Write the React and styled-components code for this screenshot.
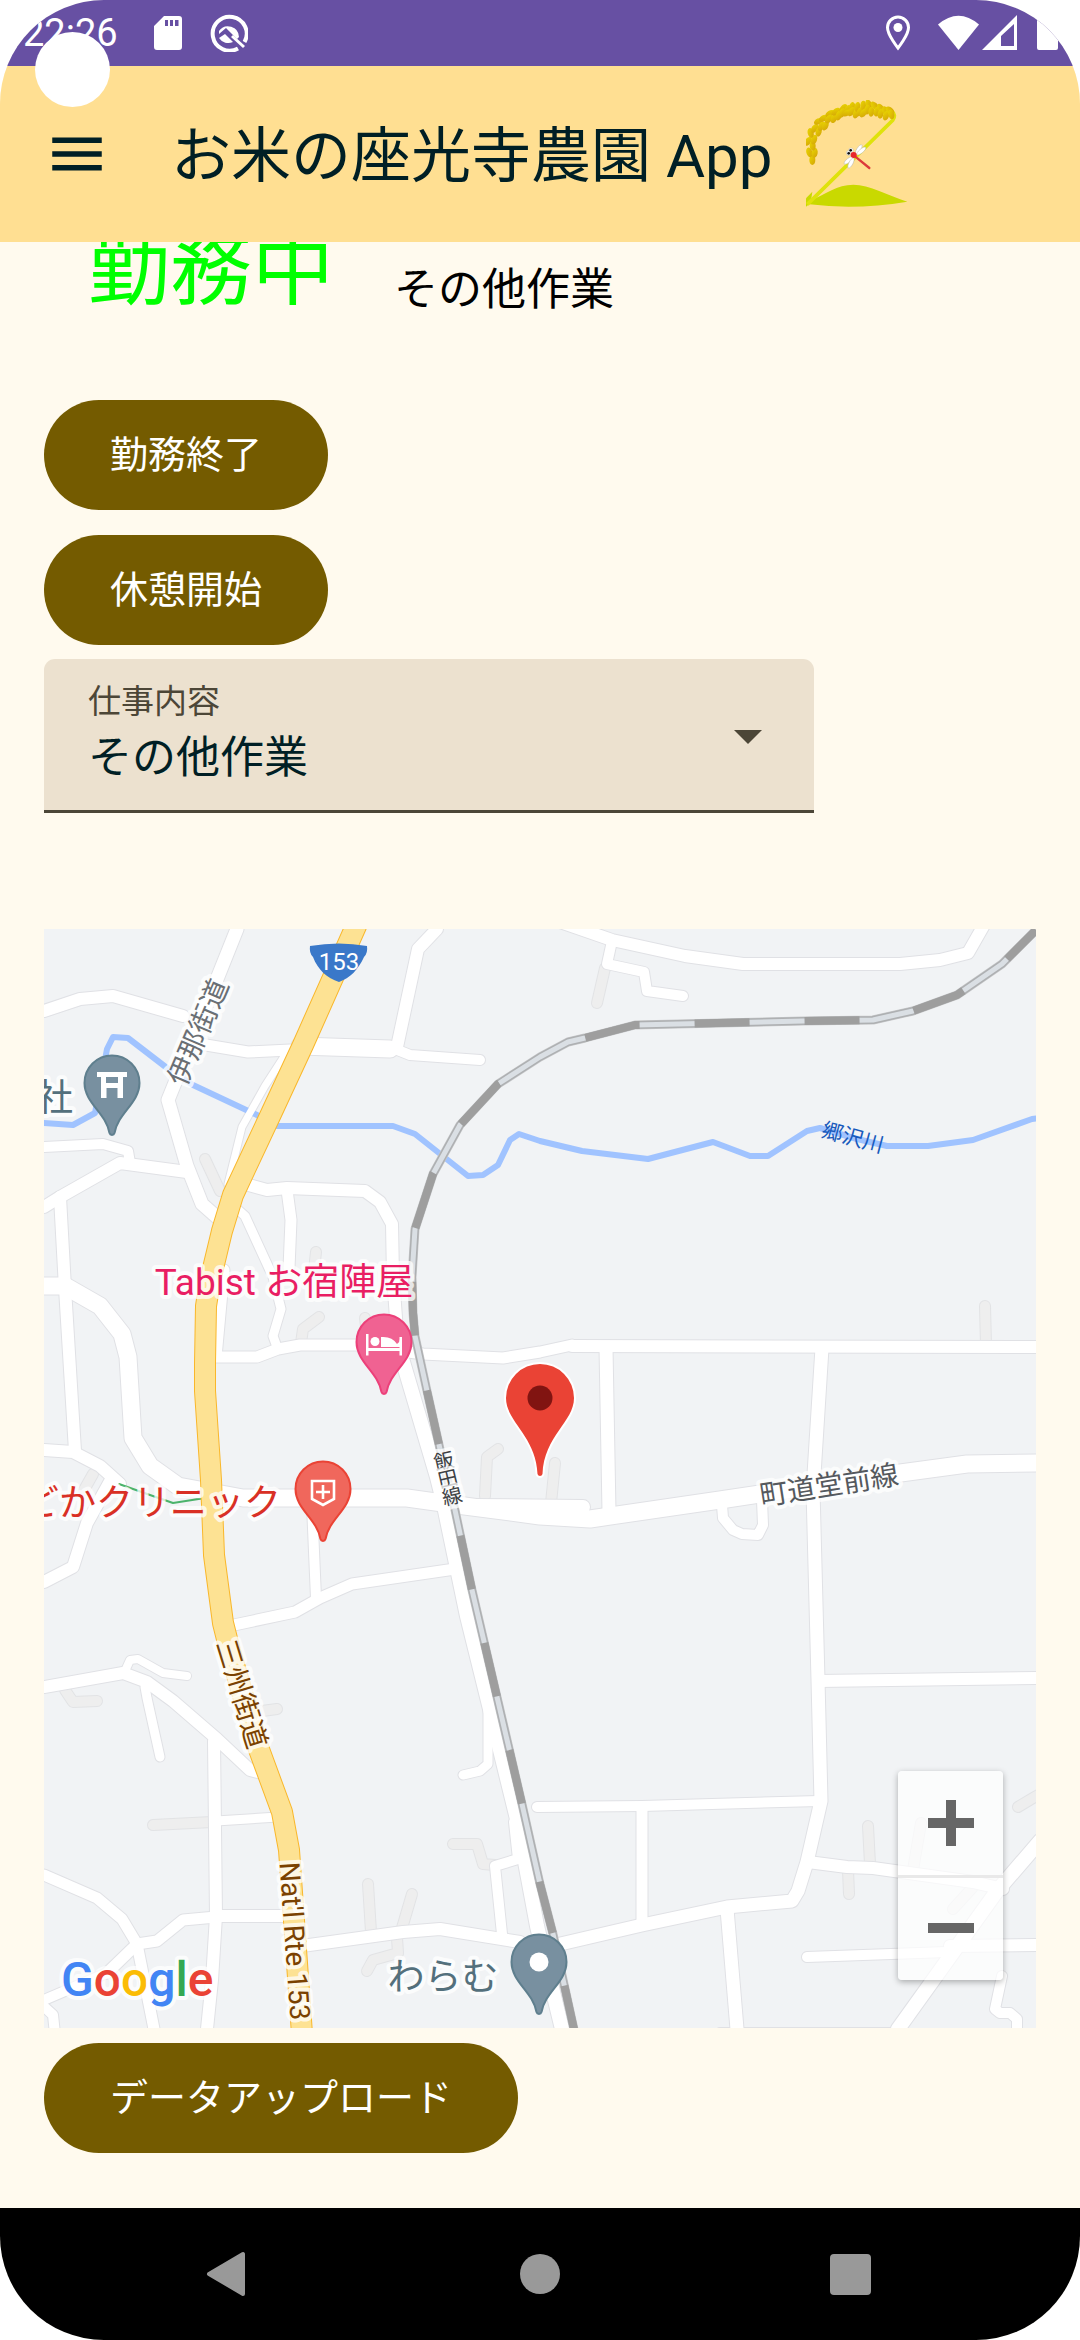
import React, { useState } from "react";
import styled, { createGlobalStyle } from "styled-components";

const GlobalStyle = createGlobalStyle`
  html, body { margin: 0; background: #ffffff; }
  *, *::before, *::after { box-sizing: border-box; }
  body, button, select { font-family: Roboto, "Noto Sans CJK JP", sans-serif; }
`;

const Screen = styled.div`
  position: relative;
  display: flex;
  flex-direction: column;
  min-height: 100vh;
  overflow: hidden;
  border-radius: 104px;
  background: #fffaee;
`;

const CameraHole = styled.div`
  position: absolute;
  top: 32px;
  left: 35px;
  z-index: 2;
  width: 75px;
  height: 75px;
  border-radius: 50%;
  background: #ffffff;
`;

const StatusBar = styled.header`
  display: flex;
  align-items: center;
  justify-content: space-between;
  height: 66px;
  padding: 0 22px 0 23px;
  background: #6750a3;
  color: #ffffff;
  font-size: 38px;
  line-height: 66px;
`;

const StatusGroup = styled.div`
  display: flex;
  align-items: center;
  gap: ${(p) => p.$gap}px;
`;

const Clock = styled.time`
  margin-right: 8px;
`;

const AppBar = styled.nav`
  position: relative;
  z-index: 1;
  display: flex;
  align-items: center;
  height: 176px;
  padding: 0 44px;
  background: #ffdf92;
`;

const IconButton = styled.button`
  display: grid;
  place-items: center;
  width: 66px;
  height: 66px;
  padding: 0;
  border: 0;
  background: transparent;
  color: #001f25;
`;

const Title = styled.h1`
  margin: 0 34px 0 61px;
  padding-top: 6px;
  color: #001f25;
  font-size: 60px;
  font-weight: 400;
  line-height: 88px;
  white-space: nowrap;
`;

const Main = styled.main`
  display: flex;
  flex: 1;
  flex-direction: column;
  align-items: flex-start;
  padding: 0 44px 55px;
`;

const WorkState = styled.div`
  display: flex;
  align-items: flex-end;
  gap: 60px;
  margin-top: -32px;
  margin-bottom: 70px;
  padding-left: 44px;
`;

const StateText = styled.strong`
  color: #00ff00;
  font-size: 82px;
  font-weight: 400;
  line-height: 120px;
`;

const TaskText = styled.span`
  color: #000000;
  font-size: 44px;
  line-height: 80px;
`;

const ButtonStack = styled.div`
  display: flex;
  flex-direction: column;
  align-items: flex-start;
  gap: 25px;
`;

const PillButton = styled.button`
  height: 110px;
  padding: 0 66px;
  border: 0;
  border-radius: 55px;
  background: #745b00;
  color: #ffffff;
  font-size: 38px;
  line-height: 56px;
`;

const Field = styled.div`
  position: relative;
  display: flex;
  flex-direction: column;
  width: 770px;
  max-width: 100%;
  height: 154px;
  margin: 14px 0 116px;
  padding-top: 19px;
  border-bottom: 3px solid #4c4637;
  border-radius: 11px 11px 0 0;
  background: #ece1cf;
`;

const FieldLabel = styled.label`
  padding-left: 44px;
  color: #4c4637;
  font-size: 33px;
  line-height: 48px;
`;

const FieldSelect = styled.select`
  height: 64px;
  padding: 0 110px 0 44px;
  border: 0;
  appearance: none;
  background: transparent;
  color: #001f25;
  font-size: 44px;
  line-height: 64px;
`;

const FieldArrow = styled.svg`
  position: absolute;
  top: 71px;
  right: 52px;
  pointer-events: none;
`;

const MapPanel = styled.section`
  position: relative;
  flex: 1;
  width: 100%;
  min-height: 600px;
  margin-bottom: 15px;
  overflow: hidden;
  background: #f1f3f5;
`;

const MapCanvas = styled.svg`
  position: absolute;
  inset: 0;
  width: 100%;
  height: 100%;
  font-family: Roboto, "Noto Sans CJK JP", sans-serif;
`;

const MapLabel = styled.text`
  fill: ${(p) => p.$color};
  font-size: ${(p) => p.$size}px;
  font-weight: ${(p) => p.$weight || 400};
  text-anchor: ${(p) => p.$anchor || "middle"};
  paint-order: stroke;
  stroke: ${(p) => (p.$plain ? "none" : "rgba(255, 255, 255, 0.75)")};
  stroke-width: 8px;
  stroke-linejoin: round;
`;

const ZoomControls = styled.div`
  position: absolute;
  right: 33px;
  bottom: 48px;
  display: flex;
  flex-direction: column;
  width: 105px;
  border-radius: 4px;
  background: rgba(255, 255, 255, 0.72);
  box-shadow: 0 2px 6px rgba(0, 0, 0, 0.3);
`;

const ZoomButton = styled.button`
  display: grid;
  place-items: center;
  height: 104px;
  padding: 0;
  border: 0;
  background: transparent;
  & + & {
    height: 105px;
    padding-bottom: 3px;
    border-top: 3px solid #e9e9e9;
  }
`;

const SystemNav = styled.footer`
  display: grid;
  grid-template-columns: repeat(3, 1fr);
  align-items: center;
  justify-items: center;
  height: 132px;
  padding: 0 73px;
  background: #000000;
`;

/* Road centre lines: [width, points] */
const ROADS = [
  [13, "237,929 217,979 168,1100 187,1166 202,1204 219,1219"],
  [12, "44,1011 80,999 113,996 183,1016"],
  [11, "200,1044 248,1052 290,1050"],
  [17, "300,1046 390,1049"],
  [10, "390,1047 410,1055 480,1060"],
  [12, "437,929 418,949 397,1047"],
  [7, "287,1052 265,1086 242,1127 228,1184"],
  [10, "44,1147 103,1144 128,1151 130,1163"],
  [12, "44,1207 60,1197 120,1163 187,1172"],
  [12, "60,1197 65,1288 75,1451"],
  [17, "44,1286 65,1286 100,1306 122,1334 128,1357 133,1438 150,1466 178,1486 243,1498 407,1498 457,1505 540,1516 590,1519 720,1500 893,1474 967,1464 1036,1463"],
  [12, "44,1450 73,1452 100,1466 120,1484"],
  [12, "112,1478 87,1523 73,1567 44,1582"],
  [12, "245,1184 267,1190 287,1188 365,1191 380,1202 392,1224 393,1277 398,1345"],
  [14, "398,1345 437,1477 443,1501 467,1616 490,1709 517,1819 537,1926 562,2029"],
  [9, "236,1208 245,1216 273,1277 281,1309 273,1336 277,1347"],
  [11, "287,1190 291,1220 289,1268"],
  [11, "224,1270 216,1357 257,1357 278,1349 300,1345 357,1345 423,1354 503,1358 540,1352 572,1345"],
  [12, "572,1346 1036,1347"],
  [13, "606,1348 609,1512"],
  [13, "822,1348 813,1490 818,1680 821,1801 807,1862 798,1891 792,1901 727,1907 642,1925 556,1945"],
  [12, "818,1681 1036,1678"],
  [10, "537,1807 642,1806 819,1801"],
  [11, "642,1807 642,1925"],
  [13, "727,1909 737,2029"],
  [6, "720,2031 900,2031"],
  [12, "808,1862 847,1867 873,1868 973,1882 1003,1889"],
  [14, "1040,1841 997,1891 898,2029"],
  [10, "807,1957 947,1952"],
  [12, "950,1946 1036,1945"],
  [10, "1002,1976 995,2009 1000,2013 1010,2013 1017,2019 1017,2034"],
  [12, "560,922 612,940 685,956 743,964 900,964 940,960 968,953 984,925"],
  [10, "612,941 607,964 644,972 647,991 683,996"],
  [10, "722,1505 723,1518 733,1530 742,1534 758,1535 763,1525 762,1500"],
  [14, "470,1506 583,1507"],
  [12, "44,1687 123,1673 147,1682 173,1701 217,1739 250,1770 262,1773"],
  [11, "234,1625 295,1612 320,1598 352,1584 455,1569"],
  [10, "312,1505 316,1598"],
  [8, "125,1671 130,1660 138,1659 163,1673 187,1676"],
  [9, "145,1687 147,1698 160,1757"],
  [12, "214,1741 216,1916 212,1980 207,2029"],
  [9, "216,1821 278,1817"],
  [12, "216,1916 290,1916"],
  [11, "44,1875 97,1898 122,1919 137,1944 155,2034"],
  [11, "216,1917 183,1920 157,1941 137,1944 107,1973"],
  [10, "107,1973 44,2000"],
  [10, "40,2003 53,2015 55,2034"],
  [12, "302,1946 403,1932 440,1929 520,1942"],
  [10, "502,1934 495,1866 518,1859 514,1822"],
  [9, "488,1709 488,1764 480,1771 463,1775"],
];

const FOOTPATHS = [
  "605,968 597,1003", "368,1884 371,1932", "412,1894 402,1928",
  "397,1938 398,1953 373,1960 367,1971", "453,1844 477,1844 483,1864 495,1865",
  "97,1701 73,1702 65,1690", "262,1711 277,1709", "205,1159 220,1191",
  "316,1252 314,1270", "319,1317 303,1329 301,1343", "365,1318 367,1335",
  "498,1449 487,1457 485,1496", "555,1463 551,1503", "985,1306 986,1345",
  "868,1826 870,1864", "848,1870 849,1894", "921,1823 913,1870",
  "973,1887 953,1909", "1040,1794 1033,1798 1018,1807", "153,1825 212,1822", "93,1474 84,1490",
];

const HIGHWAY =
  "356,926 303,1045 270,1116 233,1195 222,1231 210,1281 206,1306 205,1363 205,1391 211,1480 213,1530 214,1555 223,1623 230,1651 257,1744 282,1812 289,1850 302,2034";
const RIVER =
  "44,1123 73,1125 95,1113 107,1049 113,1037 128,1038 167,1068 193,1085 257,1115 273,1126 393,1126 415,1134 468,1176 483,1175 498,1165 510,1140 519,1134 540,1141 582,1151 648,1159 713,1142 750,1156 768,1156 807,1131 820,1128 857,1139 887,1146 928,1146 973,1140 1032,1119 1040,1118";
const RAILWAY =
  "1036,930 1007,959 1002,964 957,995 913,1011 873,1020 803,1021 635,1025 585,1038 568,1042 540,1057 498,1084 460,1125 433,1174 415,1229 412,1277 413,1313 415,1336 427,1391 440,1449 455,1510 472,1590 497,1697 522,1804 540,1884 553,1934 575,2034";
const RAIL_DASHES =
  "41 54 54 55 55 55 55 55 56 98 56 56 58 54 54 56 55 94 55 55 55 55 55 80 53 54 60 0";

const PIN_SHAPE =
  "M0-27.5A27.5 27.5 0 0 1 27.5 0C27.5 20 6 30 2.5 50A2.6 2.6 0 0 1-2.5 50C-6 30-27.5 20-27.5 0A27.5 27.5 0 0 1 0-27.5Z";

const GRAINS = [
  [97, 243, 0], [88, 220, -15], [104, 222, 10], [84, 187, 35], [98, 200, -5], [102, 182, 20],
  [92, 162, -15], [104, 148, 35], [116, 158, 15], [116, 127, 65], [130, 118, 60], [124, 142, 30],
  [136, 140, 25], [150, 104, 60], [146, 120, 35], [162, 118, 25], [168, 98, 50], [176, 110, 20],
  [190, 88, 40], [186, 102, 20], [202, 92, 30], [200, 102, 60], [216, 84, 15], [214, 98, 30],
  [228, 104, 20], [232, 84, 10], [240, 98, 30], [250, 80, 0], [250, 102, 35], [266, 76, -20],
  [262, 92, 10], [274, 98, 5], [284, 80, -45], [290, 98, 10], [302, 88, -30], [302, 104, 15],
  [316, 96, -20], [318, 110, 20], [330, 94, -50], [334, 106, -10],
];

function MapPin({ x, y, fill, edge, children }) {
  return (
    <g transform={`translate(${x} ${y})`}>
      <path d={PIN_SHAPE} fill={fill} stroke={edge} strokeWidth="2" />
      {children}
    </g>
  );
}

function FarmLogo() {
  return (
    <svg width="102" height="108" viewBox="78 63 306 324" role="img" aria-label="座光寺農園">
      <defs>
        <linearGradient id="grain" x1="0" y1="0" x2="1" y2="1">
          <stop offset="0" stopColor="#ead800" />
          <stop offset="1" stopColor="#d3a208" />
        </linearGradient>
      </defs>
      <path d="M88 366C140 345 170 317 220 317C268 317 325 350 382 368Q230 394 88 376Z" fill="#c9d900" />
      <path d="M78 358L97 338L92 372L78 383Z" fill="#c9d900" />
      <path d="M82 376L338 124Q350 108 335 97" fill="none" stroke="#dfe20c" strokeWidth="11" />
      {GRAINS.map(([x, y, a], i) => (
        <ellipse key={i} cx={x} cy={y} rx="9" ry="15" fill="url(#grain)" transform={`rotate(${a} ${x} ${y})`} />
      ))}
      <g fill="#fff" stroke="#b8b8b0" strokeWidth="1.5">
        <ellipse cx="236" cy="212" rx="17" ry="6" transform="rotate(-58 236 212)" />
        <ellipse cx="244" cy="216" rx="17" ry="6" transform="rotate(-40 244 216)" />
        <ellipse cx="206" cy="244" rx="17" ry="6" transform="rotate(-38 206 244)" />
        <ellipse cx="213" cy="252" rx="17" ry="6" transform="rotate(-62 213 252)" />
        <circle cx="206" cy="222" r="7" />
        <circle cx="213" cy="214" r="7" />
      </g>
      <path d="M226 233L268 267" stroke="#dc3a3a" strokeWidth="7" strokeLinecap="round" />
      <circle cx="221" cy="228" r="9" fill="#e8262e" />
      <circle cx="206" cy="223" r="4" fill="#111" />
      <circle cx="212" cy="214" r="4" fill="#111" />
    </svg>
  );
}

function AreaMap() {
  return (
    <MapCanvas viewBox="44 929 992 1099" preserveAspectRatio="xMidYMid slice" aria-hidden="true">
      <g fill="none" strokeLinecap="round" strokeLinejoin="round">
        {FOOTPATHS.map((p, i) => <polyline key={i} points={p} stroke="#e2e3e5" strokeWidth="12" />)}
        {FOOTPATHS.map((p, i) => <polyline key={i} points={p} stroke="#eeeeee" strokeWidth="10" />)}
        {ROADS.map(([w, p], i) => <polyline key={i} points={p} stroke="#e0e1e5" strokeWidth={w + 2} />)}
        <polyline points={RIVER} stroke="#a0c3ff" strokeWidth="6" />
        {ROADS.map(([w, p], i) => <polyline key={i} points={p} stroke="#ffffff" strokeWidth={w} />)}
        <polyline points="119,1484 150,1495 173,1503 205,1498" stroke="#4bb36b" strokeWidth="2" />
        <polyline points={HIGHWAY} stroke="#f9b72b" strokeWidth="22" />
        <polyline points={HIGHWAY} stroke="#fde293" strokeWidth="20" />
      </g>
      <g fill="none" strokeLinejoin="round">
        <polyline points={RAILWAY} stroke="#c9cacc" strokeWidth="9" />
        <polyline points={RAILWAY} stroke="#aeb0b2" strokeWidth="8" />
        <polyline points={RAILWAY} stroke="#dadfe4" strokeWidth="5" />
        <polyline points={RAILWAY} stroke="#9e9e9e" strokeWidth="8" strokeDasharray={RAIL_DASHES} />
      </g>

      <path d="M310 946Q339 941 367 946Q368 953 364 957C358 970 350 978 339 982C327 978 318 970 313 957Q309 953 310 946Z" fill="#3a78c9" />
      <MapLabel x="339" y="970" $size={24} $color="#ffffff" $plain>153</MapLabel>

      <MapLabel transform="translate(198 1032) rotate(-67)" y="10" $size={28} $color="#6a6f74">伊那街道</MapLabel>
      <MapLabel transform="translate(242 1694) rotate(73)" y="10" $size={28} $color="#7a4100">三州街道</MapLabel>
      <MapLabel transform="translate(295 1941) rotate(86)" y="10" $size={28} $color="#7a4100">Nat'l Rte 153</MapLabel>
      <MapLabel transform="translate(853 1137) rotate(15)" y="8" $size={21} $color="#185abc" $plain>郷沢川</MapLabel>
      <MapLabel transform="translate(829 1485) rotate(-9)" y="10" $size={28} $color="#55595e">町道堂前線</MapLabel>
      <MapLabel transform="translate(448 1479) rotate(-13)" $size={20} $color="#3c4043">
        <tspan x="0" y="-11">飯</tspan>
        <tspan x="0" y="7">田</tspan>
        <tspan x="0" y="25">線</tspan>
      </MapLabel>

      <MapLabel x="73" y="1111" $anchor="end" $size={37} $color="#54707c">社</MapLabel>
      <MapLabel x="284" y="1295" $size={37} $color="#e91e63">Tabist お宿陣屋</MapLabel>
      <MapLabel x="281" y="1516" $anchor="end" $size={37} $color="#d93025">どかクリニック</MapLabel>
      <MapLabel x="443" y="1990" $size={37} $color="#54707c">わらむ</MapLabel>

      <MapPin x={112} y={1083} fill="#7890a0" edge="#5f7f8e">
        <path d="M-15-11H15V-6H11V15H5.500V5H-5.500V15H-11V-6H-15ZM-6-6V0H6V-6Z" fill="#fff" fillRule="evenodd" />
      </MapPin>
      <MapPin x={384} y={1342} fill="#f06292" edge="#ec407a">
        <path d="M-18-8H-15.500V6H15.500V-5H18V13.500H15.500V9H-15.500V13.500H-18Z" fill="#fff" />
        <circle cx="-9" cy="-0.500" r="4.500" fill="#fff" />
        <path d="M-3 5V-5Q8-6 13 2Q16 0 16-3V5Z" fill="#fff" />
      </MapPin>
      <MapPin x={323} y={1489} fill="#f0675c" edge="#ea4335">
        <path d="M-11-8H11V10L0 16L-11 10Z" fill="none" stroke="#fff" strokeWidth="2.600" />
        <path d="M-7 3H7M0-4V10" stroke="#fff" strokeWidth="2.600" />
      </MapPin>
      <MapPin x={539} y={1962} fill="#7890a0" edge="#5f7f8e">
        <circle r="9.500" fill="#fff" />
      </MapPin>
      <g transform="translate(540 1398)">
        <path
          d="M0-34A34 34 0 0 1 34 0C34 24 4 38 2.500 76A2.600 2.600 0 0 1-2.500 76C-4 38-34 24-34 0A34 34 0 0 1 0-34Z"
          fill="#ea4335" stroke="#fff" strokeWidth="4" paintOrder="stroke"
        />
        <circle r="12.500" fill="#811411" />
      </g>

      <MapLabel x="61" y="1996" $anchor="start" $size={48} $weight={500} $color="#4285f4">
        G<tspan fill="#ea4335">o</tspan><tspan fill="#fbbc04">o</tspan>g<tspan fill="#34a853">l</tspan><tspan fill="#ea4335">e</tspan>
      </MapLabel>
    </MapCanvas>
  );
}

export default function App() {
  const [task, setTask] = useState("その他作業");
  return (
    <>
      <GlobalStyle />
      <Screen>
        <CameraHole />
        <StatusBar>
          <StatusGroup $gap={28}>
            <Clock>22:26</Clock>
            <svg width="28" height="36" viewBox="0 0 28 36" fill="#fff" aria-hidden="true">
              <path fillRule="evenodd" d="M10 1H25Q28 1 28 4V32Q28 35 25 35H3Q0 35 0 32V11ZM11 5V11H14V5ZM16 5V11H19V5ZM21 5V11H24.500V5Z" />
            </svg>
            <svg width="38" height="38" viewBox="0 0 38 38" fill="none" stroke="#fff" aria-hidden="true">
              <path d="M28 34.500A17 17 0 1 1 34.500 28" strokeWidth="4" />
              <path d="M9 17A11 11 0 0 1 29 23L27 25L16 14L9 20Z" fill="#fff" stroke="none" />
              <path d="M9 24L15 20L23 28A11 11 0 0 1 9 24Z" fill="#fff" stroke="none" />
              <path d="M22 22L34 33" strokeWidth="3" />
            </svg>
          </StatusGroup>
          <StatusGroup $gap={20}>
            <svg width="32" height="36" viewBox="0 0 32 36" aria-hidden="true">
              <path d="M12 2A10.500 10.500 0 0 0 1.500 12.500C1.500 20 12 33 12 33S22.500 20 22.500 12.500A10.500 10.500 0 0 0 12 2Z" fill="none" stroke="#fff" strokeWidth="3" />
              <circle cx="12" cy="12.500" r="4.500" fill="#fff" />
            </svg>
            <StatusGroup $gap={3}>
              <svg width="41" height="36" viewBox="0 0 41 36" aria-hidden="true">
                <path d="M0 9.500Q20.500-8 41 9.500L20.500 35Z" fill="#fff" />
              </svg>
              <svg width="35" height="36" viewBox="0 0 35 36" aria-hidden="true">
                <path fillRule="evenodd" d="M35 0V35H0ZM32 9L19 21V31H32Z" fill="#fff" />
              </svg>
            </StatusGroup>
            <svg width="21" height="36" viewBox="0 0 21 36" aria-hidden="true">
              <path d="M6 0H15V3H19Q21 3 21 5V33Q21 35 19 35H2Q0 35 0 33V5Q0 3 2 3H6Z" fill="#fff" />
            </svg>
          </StatusGroup>
        </StatusBar>

        <AppBar>
          <IconButton type="button" aria-label="メニュー">
            <svg width="66" height="66" viewBox="0 0 24 24" fill="currentColor" aria-hidden="true">
              <path d="M3 18h18v-2H3v2zm0-5h18v-2H3v2zm0-7v2h18V6H3z" />
            </svg>
          </IconButton>
          <Title>お米の座光寺農園 App</Title>
          <FarmLogo />
        </AppBar>

        <Main>
          <WorkState>
            <StateText>勤務中</StateText>
            <TaskText>{task}</TaskText>
          </WorkState>
          <ButtonStack>
            <PillButton type="button">勤務終了</PillButton>
            <PillButton type="button">休憩開始</PillButton>
          </ButtonStack>
          <Field>
            <FieldLabel htmlFor="task">仕事内容</FieldLabel>
            <FieldSelect id="task" value={task} onChange={(e) => setTask(e.target.value)}>
              <option>その他作業</option>
            </FieldSelect>
            <FieldArrow width="28" height="14" viewBox="0 0 28 14" aria-hidden="true">
              <path d="M0 0H28L14 14Z" fill="#4c4637" />
            </FieldArrow>
          </Field>
          <MapPanel aria-label="地図">
            <AreaMap />
            <ZoomControls>
              <ZoomButton type="button" aria-label="拡大">
                <svg width="46" height="46" viewBox="0 0 46 46" aria-hidden="true">
                  <path d="M18 0H28V18H46V28H28V46H18V28H0V18H18Z" fill="#666" />
                </svg>
              </ZoomButton>
              <ZoomButton type="button" aria-label="縮小">
                <svg width="46" height="10" viewBox="0 0 46 10" aria-hidden="true">
                  <path d="M0 0H46V10H0Z" fill="#666" />
                </svg>
              </ZoomButton>
            </ZoomControls>
          </MapPanel>
          <PillButton type="button">データアップロード</PillButton>
        </Main>

        <SystemNav>
          <IconButton type="button" aria-label="戻る">
            <svg width="66" height="66" viewBox="0 0 66 66" aria-hidden="true">
              <path d="M13 33L47 13V53Z" fill="#999" stroke="#999" strokeWidth="4" strokeLinejoin="round" />
            </svg>
          </IconButton>
          <IconButton type="button" aria-label="ホーム">
            <svg width="66" height="66" viewBox="0 0 66 66" aria-hidden="true">
              <circle cx="33" cy="33" r="20" fill="#999" />
            </svg>
          </IconButton>
          <IconButton type="button" aria-label="最近のアプリ">
            <svg width="66" height="66" viewBox="0 0 66 66" aria-hidden="true">
              <rect x="12" y="13" width="41" height="41" rx="4" fill="#999" />
            </svg>
          </IconButton>
        </SystemNav>
      </Screen>
    </>
  );
}
